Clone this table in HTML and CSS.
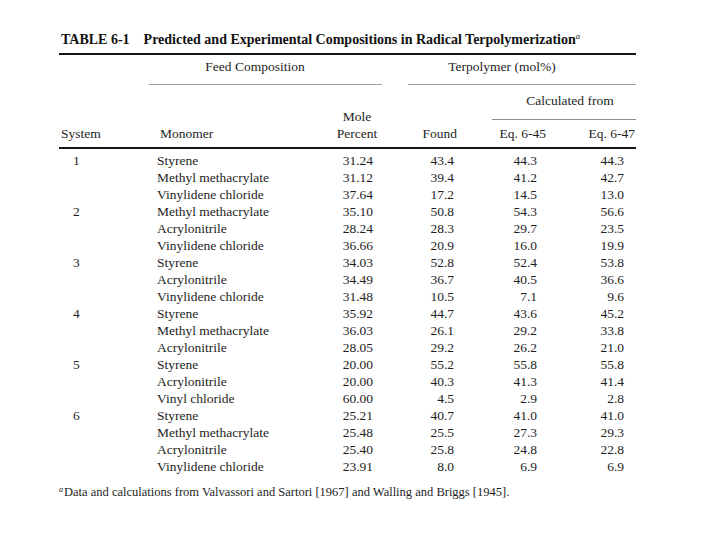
FILE: index.html
```html
<!DOCTYPE html>
<html lang="en">
<head>
<meta charset="utf-8">
<title>TABLE 6-1</title>
<link rel="stylesheet" href="styles.css">
</head>
<body>
<div class="page">
  <h1 class="title"><span class="label">TABLE 6-1</span>Predicted and Experimental Compositions in Radical Terpolymerization<sup class="fn">a</sup></h1>

  <div class="thead">
    <div class="grp feed">Feed Composition</div>
    <div class="grp terp">Terpolymer (mol%)</div>
    <div class="grp calc">Calculated from</div>
    <div class="h c1">System</div>
    <div class="h c2">Monomer</div>
    <div class="h c3 mole">Mole<br>Percent</div>
    <div class="h c4">Found</div>
    <div class="h c5">Eq. 6-45</div>
    <div class="h c6">Eq. 6-47</div>
  </div>

  <div class="tbody">
    <div class="c1">1</div><div class="c2">Styrene</div><div class="c3">31.24</div><div class="c4">43.4</div><div class="c5">44.3</div><div class="c6">44.3</div>
    <div class="c1"></div><div class="c2">Methyl methacrylate</div><div class="c3">31.12</div><div class="c4">39.4</div><div class="c5">41.2</div><div class="c6">42.7</div>
    <div class="c1"></div><div class="c2">Vinylidene chloride</div><div class="c3">37.64</div><div class="c4">17.2</div><div class="c5">14.5</div><div class="c6">13.0</div>
    <div class="c1">2</div><div class="c2">Methyl methacrylate</div><div class="c3">35.10</div><div class="c4">50.8</div><div class="c5">54.3</div><div class="c6">56.6</div>
    <div class="c1"></div><div class="c2">Acrylonitrile</div><div class="c3">28.24</div><div class="c4">28.3</div><div class="c5">29.7</div><div class="c6">23.5</div>
    <div class="c1"></div><div class="c2">Vinylidene chloride</div><div class="c3">36.66</div><div class="c4">20.9</div><div class="c5">16.0</div><div class="c6">19.9</div>
    <div class="c1">3</div><div class="c2">Styrene</div><div class="c3">34.03</div><div class="c4">52.8</div><div class="c5">52.4</div><div class="c6">53.8</div>
    <div class="c1"></div><div class="c2">Acrylonitrile</div><div class="c3">34.49</div><div class="c4">36.7</div><div class="c5">40.5</div><div class="c6">36.6</div>
    <div class="c1"></div><div class="c2">Vinylidene chloride</div><div class="c3">31.48</div><div class="c4">10.5</div><div class="c5">7.1</div><div class="c6">9.6</div>
    <div class="c1">4</div><div class="c2">Styrene</div><div class="c3">35.92</div><div class="c4">44.7</div><div class="c5">43.6</div><div class="c6">45.2</div>
    <div class="c1"></div><div class="c2">Methyl methacrylate</div><div class="c3">36.03</div><div class="c4">26.1</div><div class="c5">29.2</div><div class="c6">33.8</div>
    <div class="c1"></div><div class="c2">Acrylonitrile</div><div class="c3">28.05</div><div class="c4">29.2</div><div class="c5">26.2</div><div class="c6">21.0</div>
    <div class="c1">5</div><div class="c2">Styrene</div><div class="c3">20.00</div><div class="c4">55.2</div><div class="c5">55.8</div><div class="c6">55.8</div>
    <div class="c1"></div><div class="c2">Acrylonitrile</div><div class="c3">20.00</div><div class="c4">40.3</div><div class="c5">41.3</div><div class="c6">41.4</div>
    <div class="c1"></div><div class="c2">Vinyl chloride</div><div class="c3">60.00</div><div class="c4">4.5</div><div class="c5">2.9</div><div class="c6">2.8</div>
    <div class="c1">6</div><div class="c2">Styrene</div><div class="c3">25.21</div><div class="c4">40.7</div><div class="c5">41.0</div><div class="c6">41.0</div>
    <div class="c1"></div><div class="c2">Methyl methacrylate</div><div class="c3">25.48</div><div class="c4">25.5</div><div class="c5">27.3</div><div class="c6">29.3</div>
    <div class="c1"></div><div class="c2">Acrylonitrile</div><div class="c3">25.40</div><div class="c4">25.8</div><div class="c5">24.8</div><div class="c6">22.8</div>
    <div class="c1"></div><div class="c2">Vinylidene chloride</div><div class="c3">23.91</div><div class="c4">8.0</div><div class="c5">6.9</div><div class="c6">6.9</div>
  </div>

  <p class="note"><sup class="fn">a</sup>Data and calculations from Valvassori and Sartori [1967] and Walling and Briggs [1945].</p>
</div>
</body>
</html>
```

FILE: styles.css
```css
html, body {
  margin: 0;
  padding: 0;
  background: #ffffff;
}

body {
  font-family: "Liberation Serif", "Times New Roman", serif;
  font-size: 13.5px;
  line-height: 17px;
  color: #1e1e1e;
}

.page {
  width: 577px;
  padding: 31px 0 0 59px;
}

.title {
  margin: 0;
  padding-left: 2px;
  font-size: 14px;
  line-height: 17px;
  font-weight: bold;
  color: #111;
  border-bottom: 2px solid #161616;
  padding-bottom: 5px;
}

.label {
  display: inline-block;
  margin-right: 14px;
}

.fn {
  font-style: italic;
  font-weight: normal;
  font-size: 8.5px;
  line-height: 0;
  vertical-align: 5px;
}

.thead,
.tbody {
  display: grid;
  grid-template-columns: 90px 151px 82px 110px 56px 88px;
}

.thead {
  grid-template-rows: auto auto auto;
  border-bottom: 2px solid #161616;
}

.grp {
  text-align: center;
  border-bottom: 1px solid #a0a0a0;
}

.feed {
  grid-column: 2 / 4;
  grid-row: 1;
  padding: 3px 21px 9px 0;
}

.terp {
  grid-column: 4 / 7;
  grid-row: 1;
  margin-left: 26px;
  padding: 3px 40px 9px 0;
}

.calc {
  grid-column: 5 / 7;
  grid-row: 2;
  padding: 7px 0 10px 12px;
  border-bottom-color: #8c8c8c;
}

.h {
  grid-row: 3;
  padding: 5px 0 5px 0;
  align-self: end;
}

.h.mole {
  grid-row: 2 / 4;
  text-align: center;
  padding-left: 32px;
}

.thead .c1 { padding-left: 2px; }
.thead .c2 { padding-left: 11px; }
.thead .c4 { text-align: right; padding-right: 35px; }
.thead .c5 { text-align: right; padding-right: 2px; }
.thead .c6 { text-align: right; padding-right: 1px; }

.tbody {
  padding-top: 3px;
  grid-auto-rows: 17px;
}

.tbody .c1 { padding-left: 14px; }
.tbody .c2 { padding-left: 8px; white-space: nowrap; }
.tbody .c3 { text-align: right; padding-right: 9px; }
.tbody .c4 { text-align: right; padding-right: 38px; }
.tbody .c5 { text-align: right; padding-right: 11px; }
.tbody .c6 { text-align: right; padding-right: 12px; }

.note {
  margin: 10px 0 0 0;
  font-size: 12.5px;
  line-height: 15px;
  white-space: nowrap;
}

.note .fn {
  font-size: 8px;
  vertical-align: 4px;
  margin-right: 1px;
}
```
